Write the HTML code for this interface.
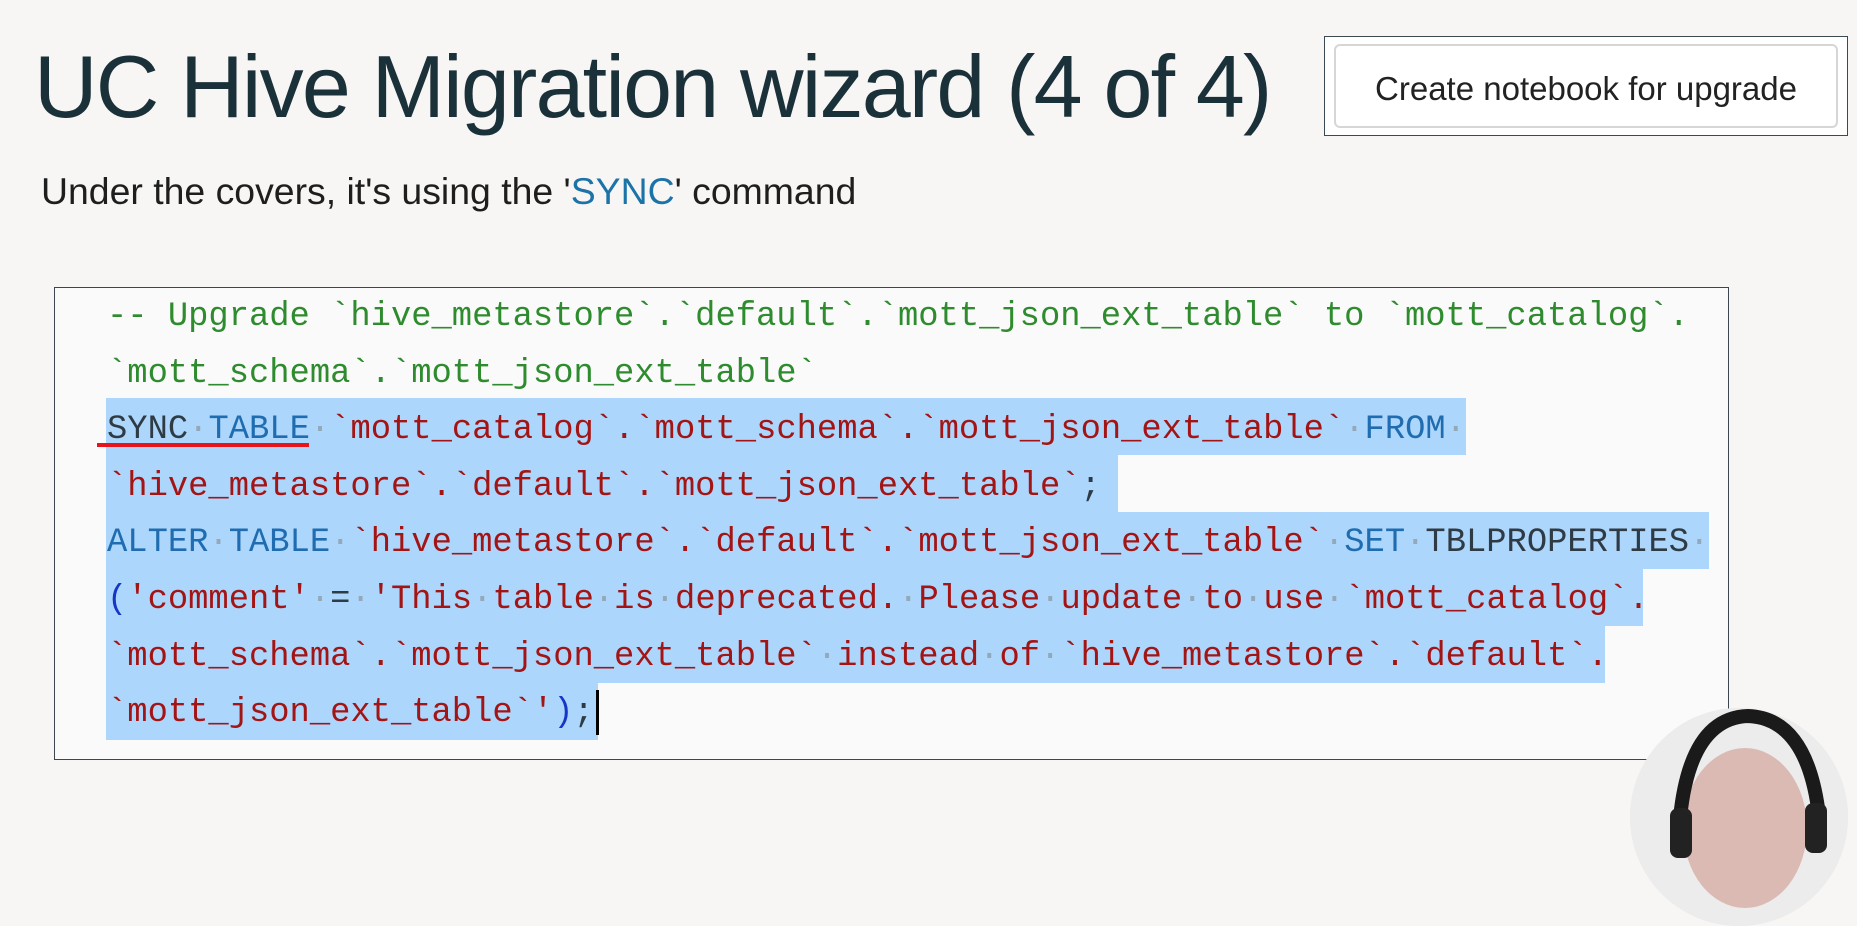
<!DOCTYPE html>
<html><head><meta charset="utf-8"><style>
html,body{margin:0;padding:0}
body{width:1857px;height:781px;background:#f7f6f5;position:relative;overflow:hidden;font-family:"Liberation Sans",sans-serif}
.title{position:absolute;left:34px;top:32px;font-size:88px;letter-spacing:-1.8px;color:#1b3139;white-space:nowrap;line-height:110px}
.btnbox{position:absolute;left:1324px;top:36px;width:522px;height:98px;border:1px solid #3a4a55;background:#fff}
.btn{position:absolute;left:9px;top:7px;width:500px;height:80px;border:2px solid #d6d6d6;border-radius:6px;background:#fff;font-size:33px;color:#222;text-align:center;line-height:86px;white-space:nowrap}
.sub{position:absolute;left:41px;top:170px;font-size:37.4px;color:#1e1e1e;white-space:nowrap}
.sub span{color:#1b73a8}
.code{position:absolute;left:54px;top:287px;width:1673px;height:471px;border:1px solid #3b4650;background:#fafafa}
.hl{position:absolute;background:#acd6fb}
.lines{position:absolute;left:107px;top:289px;font-family:"Liberation Mono",monospace;font-size:33.8px;line-height:56.6px;white-space:pre;color:#a31515}
.c{color:#2e8b2e}.k{color:#1f6db0}.g{color:#2f3b44}.d{color:#93a9b8}.b{color:#1636c8}
.ul{position:absolute;left:97px;top:443px;width:212px;height:4px;background:#e8141c}
.cur{position:absolute;left:596px;top:690px;width:3px;height:45px;background:#000}
.cam{position:absolute;left:1630px;top:708px;width:218px;height:218px;border-radius:50%;background:#e9e9e9;overflow:hidden}
</style></head><body>
<div class="title">UC Hive Migration wizard (4 of 4)</div>
<div class="btnbox"><div class="btn">Create notebook for upgrade</div></div>
<div class="sub">Under the covers, it's using the '<span>SYNC</span>' command</div>
<div class="code"></div>
<div class="hl" style="left:106px;top:398px;width:1360px;height:57px"></div>
<div class="hl" style="left:106px;top:455px;width:1012px;height:57px"></div>
<div class="hl" style="left:106px;top:512px;width:1603px;height:57px"></div>
<div class="hl" style="left:106px;top:569px;width:1537px;height:57px"></div>
<div class="hl" style="left:106px;top:626px;width:1499px;height:57px"></div>
<div class="hl" style="left:106px;top:683px;width:492px;height:57px"></div>
<div class="lines"><span class="c">-- Upgrade `hive_metastore`.`default`.`mott_json_ext_table` to `mott_catalog`.</span>
<span class="c">`mott_schema`.`mott_json_ext_table`</span>
<span class="g">SYNC</span><span class="d">·</span><span class="k">TABLE</span><span class="d">·</span>`mott_catalog`.`mott_schema`.`mott_json_ext_table`<span class="d">·</span><span class="k">FROM</span><span class="d">·</span>
`hive_metastore`.`default`.`mott_json_ext_table`<span class="g">;</span>
<span class="k">ALTER</span><span class="d">·</span><span class="k">TABLE</span><span class="d">·</span>`hive_metastore`.`default`.`mott_json_ext_table`<span class="d">·</span><span class="k">SET</span><span class="d">·</span><span class="g">TBLPROPERTIES</span><span class="d">·</span>
<span class="b">(</span>'comment'<span class="d">·</span><span class="g">=</span><span class="d">·</span>'This<span class="d">·</span>table<span class="d">·</span>is<span class="d">·</span>deprecated.<span class="d">·</span>Please<span class="d">·</span>update<span class="d">·</span>to<span class="d">·</span>use<span class="d">·</span>`mott_catalog`.
`mott_schema`.`mott_json_ext_table`<span class="d">·</span>instead<span class="d">·</span>of<span class="d">·</span>`hive_metastore`.`default`.
`mott_json_ext_table`'<span class="b">)</span><span class="g">;</span></div>
<div class="ul"></div>
<div class="cur"></div>
<div class="cam">
<svg width="218" height="218" viewBox="0 0 218 218">
<rect width="218" height="218" fill="#ececec"/>
<ellipse cx="115" cy="120" rx="62" ry="80" fill="#dcbab4"/>
<path d="M50 110 Q60 10 118 8 Q175 10 188 100" fill="none" stroke="#1a1a1a" stroke-width="14"/>
<rect x="40" y="100" width="22" height="50" rx="8" fill="#222"/>
<rect x="175" y="95" width="22" height="50" rx="8" fill="#222"/>
</svg>
</div>
</body></html>
